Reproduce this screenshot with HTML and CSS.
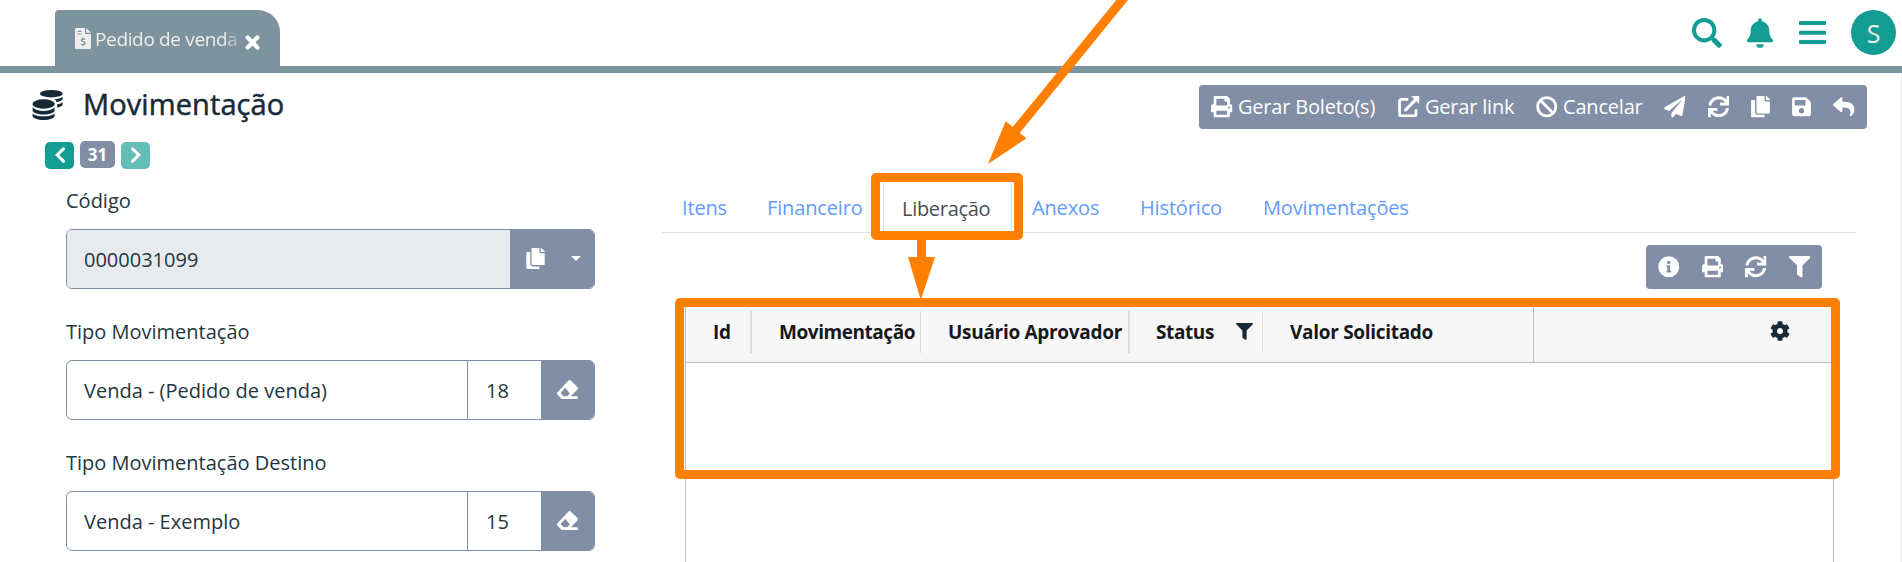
FILE: index.html
```html
<!DOCTYPE html>
<html lang="pt-BR">
<head>
<meta charset="utf-8">
<title>Movimentação</title>
<link rel="stylesheet" href="styles.css">
</head>
<body>
<svg class="sprite" aria-hidden="true">
  <symbol id="search" viewBox="0 0 512 512"><path d="M505 442.700L405.300 343c-4.500-4.500-10.600-7-17-7H372c27.600-35.300 44-79.700 44-128C416 93.100 322.900 0 208 0S0 93.100 0 208s93.100 208 208 208c48.300 0 92.700-16.400 128-44v16.300c0 6.400 2.500 12.500 7 17l99.700 99.700c9.400 9.400 24.600 9.400 33.900 0l28.300-28.300c9.400-9.400 9.400-24.600.1-34zM208 346c-76 0-138-62-138-138s62-138 138-138 138 62 138 138-62 138-138 138z"/></symbol>
  <symbol id="bell" viewBox="0 0 448 512"><path d="M224 512c35.320 0 63.970-28.650 63.970-64H160.030c0 35.350 28.650 64 63.970 64zm215.390-149.710c-19.320-20.760-55.470-51.990-55.470-154.290 0-77.700-54.480-139.900-127.940-155.160V32c0-17.670-14.320-32-31.980-32s-31.980 14.330-31.980 32v20.840C118.560 68.100 64.080 130.300 64.080 208c0 102.300-36.150 133.530-55.470 154.290-6 6.450-8.660 14.160-8.610 21.710.11 16.400 12.980 32 32.100 32h383.800c19.120 0 32-15.600 32.100-32 .05-7.550-2.610-15.270-8.610-21.710z"/></symbol>
  <symbol id="bars" viewBox="0 0 27 23"><rect width="27" height="4" rx="1"/><rect y="9.700" width="27" height="4" rx="1"/><rect y="19" width="27" height="4" rx="1"/></symbol>
  <symbol id="print" viewBox="0 0 512 512"><path d="M448 192V77.250c0-8.490-3.370-16.620-9.370-22.630L393.370 9.370c-6-6-14.140-9.370-22.630-9.370H96C78.330 0 64 14.330 64 32v160c-35.350 0-64 28.650-64 64v112c0 8.840 7.160 16 16 16h48v96c0 17.670 14.330 32 32 32h320c17.670 0 32-14.330 32-32v-96h48c8.840 0 16-7.160 16-16V256c0-35.350-28.650-64-64-64zm-64 256H128v-96h256v96zm0-224H128V64h192v48c0 8.840 7.160 16 16 16h48v96zm48 72c-13.250 0-24-10.750-24-24 0-13.260 10.750-24 24-24s24 10.740 24 24c0 13.250-10.750 24-24 24z"/></symbol>
  <symbol id="external" viewBox="0 0 22 22"><path d="M10.500 3.500H3.300A1.600 1.600 0 0 0 1.600 5.100v13.700a1.600 1.600 0 0 0 1.600 1.600h13.600a1.600 1.600 0 0 0 1.600-1.600V13.500" fill="none" stroke="currentColor" stroke-width="2.800"/><path d="M7.800 14.200L18 4" fill="none" stroke="currentColor" stroke-width="3.200" stroke-linecap="round"/><path d="M13.500 0H21a1 1 0 0 1 1 1v7.500z"/></symbol>
  <symbol id="ban" viewBox="0 0 22 22"><circle cx="11" cy="11" r="9.300" fill="none" stroke="currentColor" stroke-width="2.900"/><path d="M4.400 4.400l13.200 13.200" stroke="currentColor" stroke-width="2.900"/></symbol>
  <symbol id="plane" viewBox="0 0 512 512"><path d="M476 3.200L12.500 270.600c-18.100 10.400-15.800 35.600 2.200 43.200L121 358.400l287.300-253.200c5.500-4.900 13.300 2.600 8.600 8.300L176 407v80.500c0 23.600 28.500 32.900 42.500 15.800L282 426l124.600 52.200c14.200 6 30.400-2.900 33-18.200l72-432C515 7.800 493.300-6.800 476 3.200z"/></symbol>
  <symbol id="sync" viewBox="0 0 512 512"><path d="M440.650 12.570l4 82.770A247.160 247.160 0 0 0 255.830 8C134.730 8 33.910 94.920 12.290 209.820A12 12 0 0 0 24.090 224h49.050a12 12 0 0 0 11.670-9.260 175.910 175.910 0 0 1 317-56.940l-101.460-4.860a12 12 0 0 0-12.570 12v47.410a12 12 0 0 0 12 12H500a12 12 0 0 0 12-12V12a12 12 0 0 0-12-12h-47.370a12 12 0 0 0-11.980 12.570zM255.830 432a175.610 175.610 0 0 1-146-77.800l101.800 4.870a12 12 0 0 0 12.570-12v-47.400a12 12 0 0 0-12-12H12a12 12 0 0 0-12 12V500a12 12 0 0 0 12 12h47.350a12 12 0 0 0 12-12.600l-4.150-82.570A247.170 247.170 0 0 0 255.830 504c121.110 0 221.930-86.920 243.550-201.820a12 12 0 0 0-11.800-14.180h-49.050a12 12 0 0 0-11.670 9.260A175.860 175.860 0 0 1 255.830 432z"/></symbol>
  <symbol id="copy" viewBox="0 0 448 512"><path d="M320 448v40c0 13.255-10.745 24-24 24H24c-13.255 0-24-10.745-24-24V120c0-13.255 10.745-24 24-24h72v296c0 30.879 25.121 56 56 56h168zm0-344V0H152c-13.255 0-24 10.745-24 24v368c0 13.255 10.745 24 24 24h272c13.255 0 24-10.745 24-24V128H344c-13.200 0-24-10.800-24-24zm120.971-31.029L375.029 7.029A24 24 0 0 0 358.059 0H352v96h96v-6.059a24 24 0 0 0-7.029-16.970z"/></symbol>
  <symbol id="save" viewBox="0 0 448 512"><path d="M433.941 129.941l-83.882-83.882A48 48 0 0 0 316.118 32H48C21.490 32 0 53.490 0 80v352c0 26.510 21.490 48 48 48h352c26.510 0 48-21.490 48-48V163.882a48 48 0 0 0-14.059-33.941zM224 416c-35.346 0-64-28.654-64-64 0-35.346 28.654-64 64-64s64 28.654 64 64c0 35.346-28.654 64-64 64zm96-304.520V212c0 6.627-5.373 12-12 12H76c-6.627 0-12-5.373-12-12V108c0-6.627 5.373-12 12-12h228.520c3.183 0 6.235 1.264 8.485 3.515l3.480 3.480A11.996 11.996 0 0 1 320 111.480z"/></symbol>
  <symbol id="reply" viewBox="0 0 512 512"><path d="M8.309 189.836L184.313 37.851C199.719 24.546 224 35.347 224 56.015v80.053c160.629 1.839 288 34.032 288 186.258 0 61.441-39.581 122.309-83.333 154.132-13.653 9.931-33.111-2.533-28.077-18.631 45.344-145.012-21.507-183.510-176.590-185.742V360c0 20.700-24.300 31.453-39.687 18.164l-176.004-152c-11.071-9.562-11.086-26.753 0-36.328z"/></symbol>
  <symbol id="filter" viewBox="0 0 512 512"><path d="M487.976 0H24.028C2.710 0-8.047 25.866 7.058 40.971L192 225.941V432c0 7.831 3.821 15.170 10.237 19.662l80 55.980C298.020 518.690 320 507.493 320 487.980V225.941l184.947-184.970C520.021 25.896 509.338 0 487.976 0z"/></symbol>
  <symbol id="cog" viewBox="0 0 512 512"><path d="M487.400 315.700l-42.600-24.600c4.300-23.200 4.300-47 0-70.200l42.600-24.600c4.900-2.800 7.100-8.600 5.500-14-11.100-35.600-30-67.800-54.700-94.600-3.800-4.100-10-5.100-14.800-2.300L380.800 110c-17.900-15.400-38.500-27.300-60.800-35.100V25.800c0-5.600-3.900-10.500-9.400-11.700-36.700-8.200-74.300-7.800-109.200 0-5.500 1.200-9.400 6.100-9.400 11.700V75c-22.200 7.900-42.800 19.800-60.800 35.100L88.700 85.500c-4.900-2.800-11-1.900-14.800 2.300-24.700 26.700-43.600 58.900-54.700 94.600-1.700 5.400.6 11.200 5.500 14L67.300 221c-4.300 23.200-4.300 47 0 70.200l-42.600 24.600c-4.900 2.800-7.100 8.600-5.500 14 11.100 35.600 30 67.800 54.700 94.600 3.800 4.100 10 5.100 14.800 2.300l42.600-24.600c17.900 15.400 38.500 27.300 60.800 35.100v49.200c0 5.600 3.900 10.500 9.400 11.700 36.700 8.200 74.300 7.800 109.200 0 5.500-1.200 9.400-6.100 9.400-11.700v-49.200c22.200-7.900 42.800-19.800 60.800-35.100l42.600 24.600c4.900 2.800 11 1.900 14.800-2.300 24.700-26.700 43.600-58.900 54.700-94.600 1.500-5.500-.7-11.300-5.600-14.100zM256 336c-44.100 0-80-35.900-80-80s35.900-80 80-80 80 35.900 80 80-35.900 80-80 80z"/></symbol>
  <symbol id="info" viewBox="0 0 22 22"><path fill-rule="evenodd" d="M11 .3a10.700 10.700 0 1 1 0 21.400 10.700 10.700 0 0 1 0-21.400zM11 4.800a1.800 1.800 0 1 0 0 3.600 1.800 1.800 0 0 0 0-3.600zM8.700 9.600v1.900h1v3.600h-1V17h4.700v-1.900h-1V9.600z"/></symbol>
  <symbol id="eraser" viewBox="0 0 21 19"><path fill-rule="evenodd" d="M11.200.8a2 2 0 0 1 2.800 0l6.200 6a2 2 0 0 1 0 2.900l-6.400 6.500h6.400a.6.600 0 0 1 .6.600v1.600a.6.600 0 0 1-.6.600H5.500a2 2 0 0 1-1.400-.6L.7 14.800a2 2 0 0 1 0-2.900zM8.300 7.800L3.600 13l3.100 3.200h3.600l2.500-2.700z"/></symbol>
  <symbol id="coins" viewBox="0 0 31 30"><ellipse cx="19.300" cy="3.700" rx="11.400" ry="3.700"/><path d="M22.500 9.200c3.500-.3 6.300-1.100 8.200-2.200v1.800c0 1.500-2.500 2.800-6 3.400-.5-1.200-1.200-2.200-2.200-3zM25.200 14.200c2.300-.4 4.200-1.100 5.500-2v2c0 1.500-2 2.800-5.500 3.500z"/><ellipse cx="11.600" cy="14" rx="11.200" ry="4.700"/><path d="M.6 17.600c2.400 2.300 6.400 3.400 11 3.400s8.600-1.100 11-3.400v3c0 2.300-4.900 4-11 4s-11-1.700-11-4zM.6 23.500c2.400 2 6.400 2.800 11 2.800s8.600-.8 11-2.800v2.500c0 2.300-4.900 4-11 4s-11-1.700-11-4z"/></symbol>
  <symbol id="invoice" viewBox="0 0 16 21"><path d="M1 0h9v5a1 1 0 0 0 1 1h5v14a1 1 0 0 1-1 1H1a1 1 0 0 1-1-1V1a1 1 0 0 1 1-1zM11.300 0L16 4.700h-4.700z"/><path d="M2.500 3.300h4M2.500 6h4" class="cut"/><path d="M10 11.600c-.6-.7-3.800-1-3.800.7 0 1.800 3.900 1 3.900 2.900 0 1.800-3.400 1.500-4.200.6M8 9.600v1.200M8 16.600v1.300" class="cut"/></symbol>
  <symbol id="close" viewBox="0 0 15 15"><path d="M2.600 2.600l9.800 9.800M12.400 2.600l-9.800 9.800" fill="none" stroke="currentColor" stroke-width="4.200" stroke-linecap="round"/></symbol>
  <symbol id="left" viewBox="0 0 10 16"><path d="M8.400 1.800L2.200 8l6.200 6.200" fill="none" stroke="currentColor" stroke-width="3.100" stroke-linecap="round"/></symbol>
  <symbol id="right" viewBox="0 0 10 16"><path d="M1.600 1.800L7.800 8l-6.200 6.200" fill="none" stroke="currentColor" stroke-width="3.100" stroke-linecap="round"/></symbol>
</svg>

<header class="topbar">
  <div class="doc-tab">
    <svg class="i-invoice"><use href="#invoice"/></svg>
    <span class="doc-name">Pedido de venda</span>
    <svg class="i-close"><use href="#close"/></svg>
  </div>
  <nav class="top-actions">
    <svg class="i-search"><use href="#search"/></svg>
    <svg class="i-bell"><use href="#bell"/></svg>
    <svg class="i-bars"><use href="#bars"/></svg>
    <span class="avatar">S</span>
  </nav>
</header>

<main class="page">
  <section class="left">
    <h1 class="title"><svg class="i-coins"><use href="#coins"/></svg><span>Movimentação</span></h1>
    <div class="pager">
      <button class="pg"><svg class="i-chev"><use href="#left"/></svg></button>
      <span class="pg-num">31</span>
      <button class="pg pg-off"><svg class="i-chev"><use href="#right"/></svg></button>
    </div>
    <form class="form">
      <label class="label">Código</label>
      <div class="group">
        <div class="field readonly">0000031099</div>
        <div class="addon code"><svg class="i-copy"><use href="#copy"/></svg><i class="caret"></i></div>
      </div>
      <label class="label">Tipo Movimentação</label>
      <div class="group">
        <div class="field">Venda - (Pedido de venda)</div>
        <div class="field id">18</div>
        <div class="addon"><svg class="i-eraser"><use href="#eraser"/></svg></div>
      </div>
      <label class="label">Tipo Movimentação Destino</label>
      <div class="group">
        <div class="field">Venda - Exemplo</div>
        <div class="field id">15</div>
        <div class="addon"><svg class="i-eraser"><use href="#eraser"/></svg></div>
      </div>
    </form>
  </section>

  <section class="right">
    <div class="toolbar main-tools">
      <span class="tool t-boleto"><svg class="i-tool"><use href="#print"/></svg><span>Gerar Boleto(s)</span></span>
      <span class="tool t-link"><svg class="i-tool"><use href="#external"/></svg><span>Gerar link</span></span>
      <span class="tool t-cancel"><svg class="i-tool"><use href="#ban"/></svg><span>Cancelar</span></span>
      <svg class="i-tool"><use href="#plane"/></svg>
      <svg class="i-tool"><use href="#sync"/></svg>
      <svg class="i-tool narrow"><use href="#copy"/></svg>
      <svg class="i-tool narrow"><use href="#save"/></svg>
      <svg class="i-tool"><use href="#reply"/></svg>
    </div>

    <nav class="tabs">
      <a class="tab n1"><span>Itens</span></a>
      <a class="tab n2"><span>Financeiro</span></a>
      <a class="tab n3 active"><span>Liberação</span></a>
      <a class="tab n4"><span>Anexos</span></a>
      <a class="tab n5"><span>Histórico</span></a>
      <a class="tab n6"><span>Movimentações</span></a>
    </nav>

    <div class="toolbar grid-tools">
      <svg class="i-tool"><use href="#info"/></svg>
      <svg class="i-tool"><use href="#print"/></svg>
      <svg class="i-tool"><use href="#sync"/></svg>
      <svg class="i-tool"><use href="#filter"/></svg>
    </div>

    <div class="grid">
      <div class="grid-head">
        <div class="col c1"><span>Id</span></div>
        <div class="col c2"><span>Movimentação</span></div>
        <div class="col c3"><span>Usuário Aprovador</span></div>
        <div class="col c4"><span>Status</span><svg class="i-filter"><use href="#filter"/></svg></div>
        <div class="col c5"><span>Valor Solicitado</span></div>
        <div class="col-menu"><svg class="i-cog"><use href="#cog"/></svg></div>
      </div>
      <div class="grid-body"></div>
    </div>
  </section>
</main>

<div class="mark mark-tab"></div>
<div class="mark mark-grid"></div>
<svg class="arrows" viewBox="0 0 1902 562">
  <path d="M1116.300 0h11.700L1019.700 133l6.800 5.200L988 164l17.600-42.700 7.200 5.500z"/>
  <path d="M917 238h9v19h9l-14.200 43L908 257h9z"/>
</svg>
</body>
</html>
```
FILE: styles.css
```css
* { box-sizing: border-box; }
body {
  margin: 0;
  width: 1902px;
  height: 562px;
  overflow: hidden;
  background: #fff;
  color: #233642;
  font-family: "Open Sans", "Noto Sans", sans-serif;
  font-size: 20px;
}
svg { display: block; flex: none; fill: currentColor; }
span { white-space: nowrap; }
.sprite { display: none; }

/* top bar */
.topbar {
  display: flex;
  justify-content: space-between;
  align-items: flex-end;
  height: 73px;
  padding-left: 55px;
  border-bottom: 7px solid #7d939e;
}
.doc-tab {
  display: flex;
  align-items: center;
  width: 225px;
  height: 56px;
  padding-left: 20px;
  border-radius: 4px 22px 0 0;
  background: #7d939e;
  color: #fff;
}
.i-invoice { width: 16px; height: 21px; margin: 1px 4px 0 0; color: #eee; }
.cut { fill: none; stroke: #7d939e; stroke-width: 1.2; }
.doc-name {
  width: 143px;
  margin: 2px 7px 0 0;
  font-size: 19px;
  letter-spacing: -.35px;
  color: #eee;
  -webkit-mask-image: linear-gradient(90deg, #000 90%, rgba(0, 0, 0, .3) 100%);
  mask-image: linear-gradient(90deg, #000 90%, rgba(0, 0, 0, .3) 100%);
}
.i-close { width: 15px; height: 15px; margin-top: 8px; }
.top-actions {
  display: flex;
  align-items: center;
  height: 45px;
  margin: 0 6px 11px 0;
  color: #129c92;
}
.i-search { width: 30px; height: 30px; margin-right: 25px; }
.i-bell { width: 26px; height: 30px; margin-right: 26px; }
.i-bars { width: 27px; height: 23px; margin-right: 25px; }
.avatar {
  width: 45px;
  height: 45px;
  border-radius: 50%;
  background: #129c92;
  color: #eee;
  font-size: 25px;
  line-height: 47px;
  text-align: center;
}

/* page */
.page {
  display: flex;
  height: 489px;
  border-right: 1px solid #eee;
}
.left { width: 595px; padding: 16px 0 0 32px; }
.title {
  display: flex;
  align-items: center;
  height: 31px;
  margin: 0;
  color: #182a36;
  font-size: 29px;
  font-weight: 500;
  line-height: 31px;
  -webkit-text-stroke: .5px #182a36;
}
.title span { margin-top: -2px; letter-spacing: .1px; }
.title svg { -webkit-text-stroke: 0; }
.i-coins { width: 31px; height: 30px; margin-right: 20px; }
.pager {
  display: flex;
  gap: 6px;
  height: 28px;
  margin: 21px 0 0 13px;
}
.pg {
  display: flex;
  align-items: center;
  justify-content: center;
  width: 29px;
  height: 27px;
  margin-top: 1px;
  padding: 0;
  border: 0;
  border-radius: 5px;
  background: #129c92;
  color: #fff;
}
.pg-off { opacity: .65; }
.i-chev { width: 10px; height: 16px; margin-bottom: 1px; }
.pg-num {
  width: 35px;
  height: 27px;
  border-radius: 5px;
  background: #828ea6;
  color: #fff;
  font-size: 17px;
  font-weight: 700;
  line-height: 27px;
  text-align: center;
}
.form { margin: 0 0 0 34px; }
.label {
  display: flex;
  align-items: flex-end;
  height: 60px;
  padding-bottom: 14px;
  line-height: 28px;
}
.group + .label { height: 71px; }
.group {
  display: flex;
  height: 60px;
  overflow: hidden;
  border: 1px solid #828ea6;
  border-radius: 6px;
}
.field {
  display: flex;
  flex: 1;
  align-items: center;
  padding: 1px 0 0 17px;
}
.readonly { background: #e7ebee; }
.id { flex: none; width: 74px; padding-left: 18px; border-left: 1px solid #828ea6; }
.addon {
  display: flex;
  align-items: center;
  width: 53px;
  padding-left: 16px;
  background: #828ea6;
  color: #fff;
}
.code { width: 84px; }
.i-copy { width: 19px; height: 21px; }
.code .i-copy { margin-bottom: 1px; }
.caret { margin-left: 26px; margin-bottom: 2px; border: 5px solid transparent; border-top-color: #fff; border-bottom: 0; }
.i-eraser { width: 21px; height: 19px; margin-bottom: 1px; }

/* right column */
.right { display: flex; flex-direction: column; padding: 12px 0 0 67px; width: 1306px; }
.toolbar {
  display: flex;
  align-items: center;
  align-self: flex-end;
  height: 44px;
  border-radius: 4px;
  background: #828ea6;
  color: #fff;
  letter-spacing: -.2px;
}
.i-tool { width: 21.500px; height: 21.500px; }
.main-tools { width: 668px; gap: 22px; margin-right: 34px; padding-left: 12px; }
.main-tools .narrow { width: 19px; }
.tool { display: flex; align-items: center; gap: 5.500px; }
.tool span { margin-top: -1px; }
.t-boleto { width: 165px; }
.t-link { width: 116px; }
.t-cancel { width: 106px; }
.grid-tools { width: 176px; margin: 12px 79px 0 0; padding-left: 12px; gap: 22px; }

.tabs {
  display: flex;
  align-items: flex-end;
  height: 53px;
  width: 1194px;
  margin-top: 51px;
  border-bottom: 1px solid #dee2e6;
}
.tab {
  height: 52px;
  padding-left: 20px;
  color: #639bff;
  line-height: 56px;
  letter-spacing: -.15px;
}
.n1 { width: 85px; }
.n2 { width: 136px; }
.n3 { width: 129px; }
.n4 { width: 108px; }
.n5 { width: 123px; }
.tab.active {
  margin-bottom: -1px;
  height: 53px;
  padding-left: 18px;
  border: 1px solid #dee2e6;
  border-bottom: 0;
  border-radius: 6px 6px 0 0;
  background: #fff;
  color: #495057;
  letter-spacing: -.3px;
}

/* data grid */
.grid {
  display: flex;
  flex: 1;
  flex-direction: column;
  width: 1149px;
  margin: 12px 0 0 23px;
  border: 1px solid #b9bec7;
  border-bottom: 0;
}
.grid-head {
  display: flex;
  align-items: flex-start;
  height: 61px;
  border-bottom: 1px solid #b9bec7;
  background: #f7f7f7;
  color: #15191c;
  font-size: 19px;
  font-weight: 700;
  letter-spacing: -.3px;
}
.col {
  display: flex;
  height: 42px;
  margin-top: 9px;
  padding-left: 27px;
  border-right: 1px solid #dadde2;
  line-height: 43px;
}
.c1 { width: 66px; border-right-width: 2px; }
.c2 { width: 169px; letter-spacing: -.45px; }
.c3 { width: 209px; border-right-width: 2px; }
.c4 { width: 133px; padding-left: 26px; letter-spacing: -.4px; }
.c5 { flex: none; width: 270px; border-right: 0; }
.i-filter { width: 17px; height: 17px; margin: 12px 9px 0 auto; color: #182a36; }
.col-menu { flex: 1; height: 60px; padding: 19px 0 0 236px; border-left: 1px solid #b9bec7; }
.i-cog { width: 20px; height: 20px; color: #182a36; }

/* callouts drawn over the page */
.mark { position: absolute; border: 9px solid #ff8000; border-radius: 5px; }
.mark-tab { left: 871px; top: 173px; width: 152px; height: 67px; }
.mark-grid { left: 675px; top: 298px; width: 1165px; height: 181px; }
.arrows { position: absolute; left: 0; top: 0; width: 1902px; height: 562px; fill: #ff8000; }
```
